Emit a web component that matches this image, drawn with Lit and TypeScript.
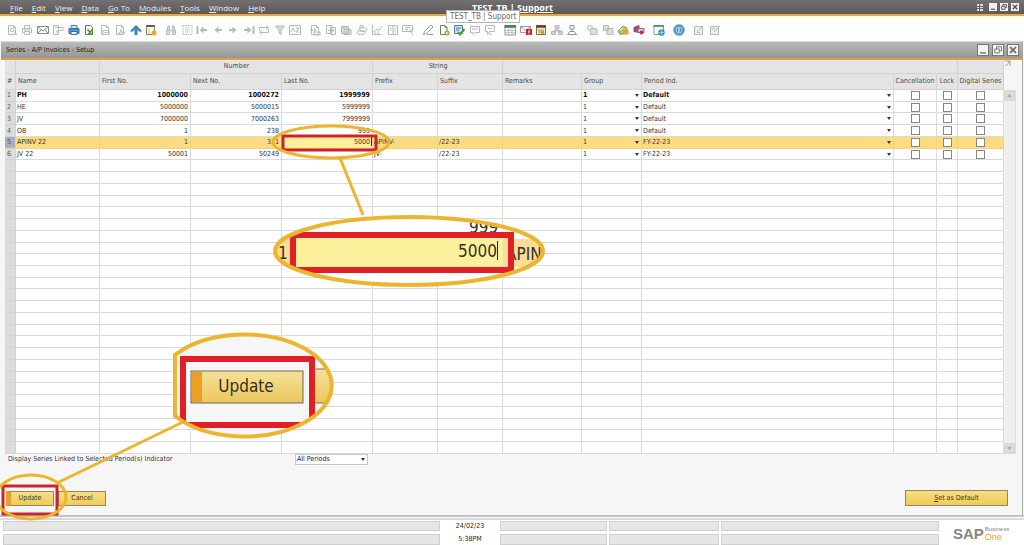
import { LitElement, html, css, svg, nothing } from "lit";
import { customElement, property } from "lit/decorators.js";
import { classMap } from "lit/directives/class-map.js";

interface SeriesRow {
  name: string;
  first: string;
  next: string;
  last: string;
  prefix?: string;
  suffix?: string;
  group: string;
  period: string;
  bold?: boolean;
  selected?: boolean;
}

const ROWS: SeriesRow[] = [
  { name: "PH", first: "1000000", next: "1000272", last: "1999999", group: "1", period: "Default", bold: true },
  { name: "HE", first: "5000000", next: "5000015", last: "5999999", group: "1", period: "Default" },
  { name: "JV", first: "7000000", next: "7000263", last: "7999999", group: "1", period: "Default" },
  { name: "OB", first: "1", next: "238", last: "999", group: "1", period: "Default" },
  { name: "APINV 22", first: "1", next: "311", last: "5000", prefix: "APINV-", suffix: "/22-23", group: "1", period: "FY-22-23", selected: true },
  { name: "JV 22", first: "50001", next: "50249", last: "", prefix: "JV-", suffix: "/22-23", group: "1", period: "FY-22-23" },
];
const TOTAL_ROWS = 31;

const MENUS: [string, string][] = [
  ["F", "ile"], ["E", "dit"], ["V", "iew"], ["D", "ata"], ["G", "o To"],
  ["M", "odules"], ["T", "ools"], ["W", "indow"], ["H", "elp"],
];

const page = svg`<path d="M2.5 1.5h5l2 2v7h-7z" fill="#fff"/><path d="M7.500 1.500v2h2"/>`;
const arrowLeft = svg`<path d="M10 6H5" stroke-width="2"/><path d="M6.500 2.500L2.500 6l4 3.500z" fill="currentColor" stroke="none"/>`;
const arrowRight = svg`<path d="M2 6h5" stroke-width="2"/><path d="M5.500 2.500L9.500 6l-4 3.500z" fill="currentColor" stroke="none"/>`;

const ICONS: Record<string, unknown> = {
  preview: svg`${page}<circle cx="6" cy="6" r="1.800"/><path d="M7.500 7.500L11 11"/>`,
  print: svg`<path d="M3.500 4V1.500h5V4M3.500 9h-2V4.500h9V9h-2M3.500 7.500h5v3h-5z"/><path d="M3 6h6"/>`,
  mail: svg`<path d="M.5 2.500h11v7H.5zM.5 2.500L6 7l5.500-4.500M.5 9.500l4-4M11.500 9.500l-4-4" stroke="#8c8c8c"/>`,
  sms: svg`<path d="M1.500 1.500h5v9h-5zM3 3.500h5M8 3.500h3v3H7l-2 2v-2"/>`,
  fax: svg`<path d="M3 1.500h6V5H3z" fill="#cfe2ef" stroke="#4b87ac"/><path d="M1 4.500h10v5H1z" fill="#4f93bd" stroke="#3b759b"/><path d="M3 7.500h6v3H3z" fill="#e6f0f6" stroke="#3b759b"/>`,
  excel: svg`<path d="M2.500 1.500h5l2 2v7h-7z" fill="#f7fbf3" stroke="#5d7d55"/><path d="M4.500 5.500l5 5.500M9.500 5.500l-5 5.500" stroke="#4c9c35" stroke-width="1.600"/>`,
  word: svg`${page}<path d="M4 6.500h6v4H4zM5.500 8.500h3"/>`,
  pdf: svg`${page}<path d="M4 10c2-1 3-3 3-5 0 2 1 4 4 4-2-.5-5 0-7 1"/>`,
  launch: svg`<path d="M6 11V4" stroke="#3788bb" stroke-width="3"/><path d="M0 7l6-6 6 6-2 1-4-3.500L2 8z" fill="#3788bb" stroke="none"/>`,
  lockScreen: svg`<path d="M1.500 1.500h8v9h-8z" fill="#fff" stroke="#9a7e4f"/><path d="M1.500 2h8" stroke="#6b5b43" stroke-width="2"/><path d="M4 4v6" stroke="#bbb"/><circle cx="9" cy="9" r="2.500" fill="#f3a41c" stroke="none"/>`,
  find: svg`<path d="M1.500 6.500h3v4h-3zM7.500 6.500h3v4h-3zM2 6l1-4h1.500v4M10 6L9 2H7.500v4M4.500 6.500h3" fill="#ddd"/>`,
  add: svg`<path d="M2 1.500h9v9H2zM4 4h5M4 6h5M4 8h5" stroke-dasharray="1.500 .8"/>`,
  first: svg`<path d="M1.500 2v8" stroke-width="2"/><path d="M11 6H7" stroke-width="2"/><path d="M7.500 2.500L3.500 6l4 3.500z" fill="currentColor" stroke="none"/>`,
  previous: arrowLeft,
  next: arrowRight,
  last: svg`<path d="M10.500 2v8" stroke-width="2"/><path d="M1 6h4" stroke-width="2"/><path d="M4.500 2.500L8.500 6l-4 3.500z" fill="currentColor" stroke="none"/>`,
  refresh: svg`<path d="M1.500 7V3.500H10M10.500 5v3.500H2M8 1.500l2.500 2L8 5.500M4 6.500l-2.500 2L4 10.500"/>`,
  filter: svg`<path d="M1.500 2h9L7 6.500v4L5 9V6.500z" fill="#d8d8d8"/>`,
  sort: svg`<path d="M.5 1.500h11v9H.5zM2 8l2-4 2 4M7 4h3L7 8h3"/>`,
  baseDoc: svg`${page}<path d="M1 6h6M5 4l2 2-2 2M5 8h6v3H5z"/>`,
  targetDoc: svg`<path d="M1.500 1.500h5v8h-5zM5.500 3.500h5v7h-5zM3 6.500h6M7 4.500l2 2-2 2"/>`,
  gross: svg`<path d="M1.500 2.500h7v7h-7zM4 5.500h7v5H4zM2 4h6M5 8h5" fill="#e2e2e2"/>`,
  payment: svg`<ellipse cx="5" cy="8.500" rx="4" ry="2"/><ellipse cx="7" cy="5.500" rx="4" ry="2"/><path d="M4 5V1.500h3V4"/>`,
  volume: svg`<path d="M1.500 1v9.500h9M3 8l3-3 2 1.500 3-4M4 10V8M7 10V7"/>`,
  journal: svg`<path d="M1.500 1.500h9v9h-9zM6 1.500v9M3 4h1.500M3 6h1.500M7.500 4H9M7.500 6H9M7.500 8H9"/>`,
  layout: svg`<path d="M.5 1.500h10v6H.5zM3 3.500h5M3 5.500h3M6 8l4-3M8 7l3 4"/>`,
  edit: svg`<path d="M1.500 10.500l1-3L9 1l2 2-6.500 6.500zM5 10.500h6" stroke="#999"/>`,
  newActivity: svg`<path d="M2.500 1.500h4.500l2 2v7H2.500z" fill="#fff" stroke="#6d7a55"/><path d="M7 1.500v2h2" stroke="#6d7a55"/><circle cx="9" cy="9" r="2.500" fill="#7da51a" stroke="none"/><path d="M7.500 9h3M9 7.500v3" stroke="#fff" stroke-width=".8"/>`,
  approve: svg`<path d="M1.500 1.500h8v8h-8z" fill="#cfe3f2" stroke="#4480aa"/><path d="M3 4h5M3 6h3" stroke="#4480aa"/><path d="M5 8l2 2.500L11.500 5" stroke="#54952c" stroke-width="2"/>`,
  message: svg`<path d="M1.500 2.500h9v6H6l-2 2v-2H1.500zM3 5h6"/>`,
  reply: svg`<path d="M1.500 1.500h9v6h-5l-2 3v-3h-2zM8 10H5M4 4.500h4"/>`,
  table: svg`<path d="M1 1.500h10.500v9.500H1z" fill="#fff" stroke="#8e9a8b"/><path d="M.5 2.500h11.500" stroke="#4b7d4b" stroke-width="2.500"/><path d="M4.500 4v7M8 4v7M1 6.500h10.500M1 8.700h10.500" stroke="#a9b5a6" stroke-width=".8"/>`,
  alert: svg`<path d="M.5 2.500h10v6H.5zM.5 2.500l5 4 5-4" fill="#fff" stroke="#999"/><path d="M6 5h6v6H6z" fill="#c8242e" stroke="none"/><path d="M9 6v3M9 9.500v1" stroke="#fff"/>`,
  calendar: svg`<path d="M1.500 1.500h9v9h-9z" fill="#f7e7c4" stroke="#8a6f45"/><path d="M1 2.500h10" stroke="#5a4630" stroke-width="2.500"/><path d="M3 6h6M3 8h3" stroke="#a58d63"/><path d="M6 7h3v3H6z" fill="#e39a2c" stroke="none"/>`,
  orgChart: svg`<path d="M4 1.500h4V5H4zM.5 7.500h4v3h-4zM7.500 7.500h4v3h-4zM6 5v1.500M2.500 7.500v-1h7v1" fill="#cfcfcf"/>`,
  relation: svg`<path d="M4 1.500h4V5H4zM6 5v2M2 10.500l1.500-3h5l1.500 3zM1 10.500h10" stroke="#8c9a9f"/>`,
  copy: svg`<circle cx="4" cy="4" r="2.500"/><path d="M4.500 4.500h5l1.500 1v5H4.500z" fill="#ddd"/>`,
  paste: svg`<path d="M1.500 1.500h5v5h-5zM5 4.500h6v6H5z" fill="#ddd"/>`,
  inbox: svg`<path d="M1 7l5-5 4 2v5L3 10.500z" fill="#b8c46b" stroke="#8a9a4a"/><path d="M6 6h5.500v4.500H6z" fill="#e2a43a" stroke="none"/><path d="M3 6l3-2" stroke="#fff"/>`,
  campaign: svg`<path d="M1 3.500l5-2v7L1 7.500z" fill="#b14a72" stroke="#8b456f"/><path d="M5 4.500h6v4H5z" fill="#d8d3e8" stroke="#6b6aa8"/><circle cx="8.500" cy="8.500" r="2" fill="#d0342c" stroke="none"/>`,
  browser: svg`<path d="M1 1.500h9.500v9H1z" fill="#fff" stroke="#8b9aa5"/><path d="M.5 2h10.500" stroke="#657683" stroke-width="1.600"/><circle cx="8.500" cy="8.500" r="3.200" fill="#2f97b8" stroke="none"/><path d="M6 8.500h5M8.500 6v5" stroke="#bfe3ee" stroke-width=".7"/>`,
  help: svg`<circle cx="6" cy="6" r="5.500" fill="#4a90bf" stroke="#8db9d8"/><circle cx="6" cy="6" r="3" stroke="#cfe4f2" stroke-width=".8"/><path d="M6 4v4" stroke="#fff"/>`,
  note: svg`<path d="M1.500 2.500h8v8h-8zM4 8l6-6" fill="#eee"/><path d="M4 8.500h3"/>`,
  noteEdit: svg`<path d="M1.500 2.500h8v8h-8zM5 8l6-6M3 5h3" fill="#eee"/>`,
};

const TOOL_GROUPS: string[][] = [
  ["preview", "print", "mail", "sms", "fax", "excel", "word", "pdf", "launch", "lockScreen"],
  ["find", "add", "first", "previous", "next", "last", "refresh", "filter", "sort"],
  ["baseDoc", "targetDoc", "gross", "payment", "volume", "journal", "layout"],
  ["edit", "newActivity", "approve", "message", "reply"],
  ["table", "alert", "calendar", "orgChart", "relation"],
  ["copy", "paste", "inbox", "campaign"],
  ["browser"],
  ["help"],
  ["note", "noteEdit"],
];

@customElement("window-controls")
class WindowControls extends LitElement {
  @property({ type: Boolean, reflect: true }) large = false;

  static styles = css`
    :host { display: flex; gap: 3px; align-items: center; }
    .control { width: 8px; height: 8px; padding: 0; border: 0; background: #f2f2f2; display: grid; place-items: center; }
    :host([large]) .control { width: 12px; height: 12px; border: 1px solid #777; background: #f4f4f4; }
    .glyph { width: 6px; height: 6px; fill: none; stroke: #4e4e4e; stroke-width: 1.2; display: block; }
    :host([large]) .glyph { width: 8px; height: 8px; stroke: #777; stroke-width: 1; }
  `;

  render() {
    return html`
      <button class="control" aria-label="Minimize"><svg class="glyph" viewBox="0 0 8 8"><path d="M1 7h6" stroke-width="1.5"/></svg></button>
      <button class="control" aria-label="Restore"><svg class="glyph" viewBox="0 0 8 8"><path d="M2.500 3V.8h5v4h-2M.8 3h4.500v4H.8z"/></svg></button>
      <button class="control" aria-label="Close"><svg class="glyph" viewBox="0 0 8 8"><path d="M1 1l6 6M7 1L1 7" stroke-width="1.800"/></svg></button>
    `;
  }
}

@customElement("tool-bar")
class ToolBar extends LitElement {
  static styles = css`
    :host { display: flex; gap: 8px; align-items: center; height: 25px; padding: 2px 6px 0; box-sizing: border-box; background: linear-gradient(#fffbe0, #fdfdfd 4px); }
    .group { display: flex; justify-content: space-between; flex: none; }
    .tool { width: 12px; height: 12px; padding: 0; border: 0; background: none; color: #b8b8b8; }
    .icon { display: block; width: 12px; height: 12px; fill: none; stroke: currentColor; stroke-width: 1; }
  `;

  render() {
    return TOOL_GROUPS.map((group) => html`
      <div class="group" style="width:${Math.round(group.length * 15.4) - 3}px">
        ${group.map((name) => html`<button class="tool" aria-label=${name}><svg class="icon" viewBox="0 0 12 12">${ICONS[name]}</svg></button>`)}
      </div>`);
  }
}

@customElement("series-table")
class SeriesTable extends LitElement {
  static styles = css`
    :host { display: grid; grid-template-columns: minmax(0, 1fr) 12px; min-height: 0; }
    .grid { border-collapse: separate; border-spacing: 0; table-layout: fixed; width: 100%; height: 100%; background: #fff; }
    .c-index { width: 11px; }
    .c-name { width: 84px; }
    .c-number { width: 91px; }
    .c-string { width: 65px; }
    .c-remarks { width: 79px; }
    .c-group { width: 60px; }
    .c-cancel { width: 43px; }
    .c-lock { width: 21px; }
    .c-digital { width: 46px; }
    th { height: 14px; box-sizing: border-box; padding: 0 1px 0 2px; background: #e4e4e4; border-right: 1px solid #d2d2d2; border-bottom: 1px solid #d2d2d2; font-weight: 400; color: #4a4a4a; text-align: left; white-space: nowrap; line-height: 11px; }
    .labels th { height: 16px; }
    .span { text-align: center; }
    .open { border-right-color: #e4e4e4; }
    .check, .labels .check { text-align: center; padding: 0; }
    td { height: 11px; box-sizing: border-box; padding: 0 2px 0 1px; border-right: 1px solid #dadada; border-bottom: 1px solid #dadada; line-height: 10px; white-space: nowrap; color: #333; }
    .index { background: #dcdcdc; border-color: #d2d2d2; color: #555; padding: 0 1px 0 2px; }
    .num { text-align: right; }
    .bold td { font-weight: 700; color: #111; }
    .bold .index { font-weight: 400; color: #555; }
    .selected td { background: #fddb80; border-color: #f5d37a; }
    .selected .index { background: #a8aec0; }
    .selected .editing { background: #fdf09c; padding: 0; }
    .edit { display: block; box-sizing: border-box; width: 100%; height: 10px; padding: 0 2px 0 0; border: 0; outline: 0; background: transparent; font: inherit; color: #333; text-align: right; }
    .picker { display: grid; grid-template-columns: minmax(0, 1fr) 5px; align-items: center; }
    .select { appearance: none; grid-area: 1 / 1 / 2 / 3; width: 100%; height: 10px; padding: 0; border: 0; background: transparent; font: inherit; line-height: 10px; color: inherit; }
    .arrow { grid-area: 1 / 2; pointer-events: none; border: 2px solid transparent; border-top: 3px solid #333; border-bottom: 0; justify-self: end; }
    .box { appearance: none; display: block; box-sizing: border-box; width: 9px; height: 9px; margin: 0 auto; border: 1px solid #858585; background: #fff; }
    .scroll { display: flex; flex-direction: column; justify-content: space-between; margin-top: 30px; background: #efefef; border-right: 1px solid #ddd; }
    .step { width: 11px; height: 11px; padding: 0; border: 0; background: #dadada; display: grid; place-items: center; }
    .tri { width: 5px; height: 3px; fill: #aaa; }
    .side { position: relative; display: grid; }
    .expand { position: absolute; top: 0; left: 0; width: 8px; height: 8px; fill: none; stroke: #999; }
  `;

  private picker(value: string, label: string) {
    return html`<div class="picker">
      <select class="select" aria-label=${label}><option>${value}</option></select>
      <span class="arrow"></span>
    </div>`;
  }

  private row(index: number) {
    const r = ROWS[index];
    if (!r) {
      return html`<tr><td class="index"></td>${Array.from({ length: 12 }, () => html`<td></td>`)}</tr>`;
    }
    const box = (label: string) => html`<td class="check"><input class="box" type="checkbox" aria-label="${label}, ${r.name}" /></td>`;
    return html`<tr class=${classMap({ bold: !!r.bold, selected: !!r.selected })}>
      <td class="index">${index + 1}</td>
      <td>${r.name}</td>
      <td class="num">${r.first}</td>
      <td class="num">${r.next}</td>
      ${r.selected
        ? html`<td class="num editing"><input class="edit" aria-label="Last No., ${r.name}" .value=${r.last} /></td>`
        : html`<td class="num">${r.last}</td>`}
      <td>${r.prefix ?? nothing}</td>
      <td>${r.suffix ?? nothing}</td>
      <td></td>
      <td>${this.picker(r.group, `Group, ${r.name}`)}</td>
      <td>${this.picker(r.period, `Period Ind., ${r.name}`)}</td>
      ${box("Cancellation")}${box("Lock")}${box("Digital Series")}
    </tr>`;
  }

  render() {
    return html`
      <table class="grid">
        <colgroup>
          <col class="c-index" /><col class="c-name" /><col class="c-number" /><col class="c-number" /><col class="c-number" />
          <col class="c-string" /><col class="c-string" /><col class="c-remarks" /><col class="c-group" /><col />
          <col class="c-cancel" /><col class="c-lock" /><col class="c-digital" />
        </colgroup>
        <thead>
          <tr>
            <th></th><th></th>
            <th class="span" colspan="3">Number</th>
            <th class="span" colspan="2">String</th>
            <th class="open" colspan="4"></th><th></th><th></th>
          </tr>
          <tr class="labels">
            <th>#</th><th>Name</th><th>First No.</th><th>Next No.</th><th>Last No.</th><th>Prefix</th><th>Suffix</th>
            <th>Remarks</th><th>Group</th><th>Period Ind.</th>
            <th class="check">Cancellation</th><th class="check">Lock</th><th class="check">Digital Series</th>
          </tr>
        </thead>
        <tbody>${Array.from({ length: TOTAL_ROWS }, (_, i) => this.row(i))}</tbody>
      </table>
      <div class="side">
        <svg class="expand" viewBox="0 0 8 8"><path d="M1 1h5v5M6 1L2 6"/></svg>
        <div class="scroll">
          <button class="step" aria-label="Scroll up"><svg class="tri" viewBox="0 0 6 4"><path d="M0 4l3-4 3 4z"/></svg></button>
          <button class="step" aria-label="Scroll down"><svg class="tri" viewBox="0 0 6 4"><path d="M0 0l3 4 3-4z"/></svg></button>
        </div>
      </div>
    `;
  }
}

@customElement("call-outs")
class CallOuts extends LitElement {
  static styles = css`
    :host { position: absolute; top: 0; left: 0; pointer-events: none; }
    .layer { display: block; }
    .ring { fill: none; stroke: #ebb52f; stroke-width: 3; }
    .ring-lg { fill: none; stroke: #ebb52f; stroke-width: 4; }
    .frame { fill: none; stroke: #c9252b; stroke-width: 3; }
    .frame-lg { fill: none; stroke: #e11f26; stroke-width: 6; }
    .label { font-size: 17px; fill: #33301f; }
    .band { fill: #fbdd98; }
    .caret { stroke: #222; stroke-width: 1; }
  `;

  render() {
    return html`<svg class="layer" width="560" height="545" viewBox="0 0 560 545">
      <defs>
        <clipPath id="cell"><ellipse cx="409" cy="251" rx="134" ry="34"/></clipPath>
        <clipPath id="update"><path d="M175 355A87 51 0 1 1 175 416z"/></clipPath>
        <linearGradient id="gold" x1="0" y1="0" x2="0" y2="1">
          <stop offset="0" stop-color="#f6e19a"/><stop offset="1" stop-color="#ebc75c"/>
        </linearGradient>
      </defs>

      <path class="caret" d="M371.500 137v9"/>
      <rect class="frame" x="283" y="136" width="93" height="14"/>
      <ellipse class="ring" cx="331" cy="142" rx="58" ry="16"/>
      <path class="ring" d="M340 158l23 57"/>

      <g clip-path="url(#cell)">
        <rect x="270" y="214" width="280" height="76" fill="#fff"/>
        <rect class="band" x="270" y="239" width="280" height="28"/>
        <text class="label" x="278" y="259">1</text>
        <text class="label" x="469" y="233">999</text>
        <text class="label" x="506" y="260">APINV</text>
        <rect class="frame-lg" x="293" y="235" width="218" height="35"/>
        <rect x="296" y="238" width="207" height="29" fill="#fdf09c"/>
        <rect x="503" y="238" width="5" height="29" fill="#f5dca2"/>
        <text class="label" x="497" y="257" text-anchor="end">5000</text>
        <path class="caret" d="M497.500 241v19"/>
      </g>
      <ellipse class="ring-lg" cx="409" cy="251" rx="134" ry="34"/>

      <path class="ring" d="M183 422L57 483"/>
      <g clip-path="url(#update)">
        <rect x="170" y="330" width="170" height="112" fill="#f6f6f6"/>
        <rect x="310" y="369" width="30" height="34" fill="url(#gold)" stroke="#77735f"/>
        <rect class="frame-lg" x="183" y="359" width="129" height="66" fill="#f6f6f6"/>
        <rect x="191" y="371" width="112" height="32" fill="url(#gold)" stroke="#6a675a"/>
        <rect x="192" y="372" width="10" height="30" fill="#ec9f22"/>
        <text class="label" x="246" y="392" text-anchor="middle">Update</text>
      </g>
      <path class="ring-lg" d="M175 355A87 51 0 1 1 175 416z"/>

      <rect class="frame" x="3" y="486" width="54" height="28"/>
      <ellipse class="ring" cx="31" cy="497" rx="35" ry="22"/>
    </svg>`;
  }
}

@customElement("app-root")
class AppRoot extends LitElement {
  static styles = css`
    :host { display: flex; flex-direction: column; position: relative; min-height: 100vh; overflow: hidden; box-sizing: border-box; background: #f6f6f6; font: 7px/11px "DejaVu Sans Condensed", "DejaVu Sans", sans-serif; font-stretch: condensed; color: #333; }
    .menubar { display: grid; grid-template-columns: 1fr auto 1fr; align-items: center; height: 16px; box-sizing: border-box; border-bottom: 2px solid #e5ac3c; padding: 0 5px 0 6px; background: linear-gradient(#737173, #5d5859); font-family: "Open Sans", sans-serif; font-size: 8px; font-stretch: normal; color: #f0f0f0; }
    .menus { display: flex; gap: 1px; }
    .menu { padding: 0 4px; border: 0; background: none; color: inherit; font: inherit; }
    .key { text-decoration: underline; }
    .title { font-size: 9px; font-weight: 700; text-decoration: underline; color: #fff; }
    .tip { position: absolute; top: 10px; left: 446px; padding: 0 3px; border: 1px solid #b5b5b5; background: #fff; color: #666; font-size: 8px; z-index: 2; }
    .system { display: flex; justify-content: flex-end; align-items: center; gap: 6px; }
    .tiles { width: 6px; height: 7px; fill: #ddd; }
    .child { flex: 1; display: flex; flex-direction: column; margin: 0 1px 0 1px; border-right: 1px solid #aaa; }
    .caption { display: flex; justify-content: space-between; align-items: center; height: 19px; box-sizing: border-box; border-top: 1px solid #ddd; border-bottom: 2px solid #d9a04a; padding: 0 3px 0 5px; background: linear-gradient(#b9b9b9, #969696); color: #222; }
    .series { flex: 1; margin: 0 6px 0 4px; }
    .filter { display: flex; align-items: center; height: 11px; padding: 0 7px; }
    .filter-label { width: 287px; }
    .period { display: grid; align-items: center; }
    .drop { appearance: none; grid-area: 1 / 1; box-sizing: border-box; width: 73px; height: 11px; padding: 0 1px; border: 1px solid #c8c8c8; background: #fff; font: inherit; line-height: 9px; color: #222; }
    .arrow { grid-area: 1 / 1; justify-self: end; margin-right: 3px; border: 2px solid transparent; border-top: 3px solid #333; border-bottom: 0; pointer-events: none; }
    .actions { display: flex; gap: 4px; align-items: center; padding: 25px 14px 9px 5px; }
    .btn { width: 48px; height: 15px; padding: 0; border: 1px solid #8f8865; background: linear-gradient(#f7dd84, #f0cb58); font: inherit; color: #3a3524; }
    .primary { border-left: 5px solid #e9a02b; padding-right: 4px; }
    .default { width: 103px; height: 16px; margin-left: auto; }
    .status { display: grid; grid-template-columns: 437px 56px 107px 110px 1fr 83px; grid-template-rows: 10px 11px; gap: 3px 2px; padding: 4px 0 0 3px; border-top: 2px solid #c4c4c4; background: #fff linear-gradient(#fff 1px, #dadada 1px, #dadada 3px, #fff 3px) no-repeat; }
    .slot { background: #e6e6e6; border: 1px solid #cfcfcf; box-sizing: border-box; }
    .clock { text-align: center; color: #222; }
    .brand { grid-area: 1 / 6 / 3 / 7; display: flex; align-items: center; gap: 1px; padding: 0 0 0 12px; color: #858585; }
    .sap { font: 700 15px/15px "Liberation Sans", sans-serif; }
    .product { display: grid; font: 6px/7px "Liberation Sans", sans-serif; }
    .one { font: 9px/8px "Liberation Sans", sans-serif; color: #e6a52f; }
  `;

  render() {
    const slots = () => html`<span class="slot"></span>`;
    return html`
      <header class="menubar">
        <nav class="menus">${MENUS.map(([key, rest]) => html`<button class="menu"><span class="key">${key}</span>${rest}</button>`)}</nav>
        <span class="title">TEST_TB | Support</span>
        <div class="system">
          <svg class="tiles" viewBox="0 0 6 7"><path d="M0 0h2v2H0zM0 3h2v1H0zM0 5h2v2H0zM3 0h3v2H3zM3 3h3v1H3zM3 5h3v2H3z"/></svg>
          <window-controls></window-controls>
        </div>
      </header>
      <span class="tip">TEST_TB | Support</span>
      <tool-bar></tool-bar>
      <main class="child">
        <div class="caption"><span>Series - A/P Invoices - Setup</span><window-controls large></window-controls></div>
        <series-table class="series"></series-table>
        <div class="filter">
          <label class="filter-label" for="periods">Display Series Linked to Selected Period(s) Indicator</label>
          <div class="period"><select id="periods" class="drop"><option>All Periods</option></select><span class="arrow"></span></div>
        </div>
        <div class="actions">
          <button class="btn primary">Update</button>
          <button class="btn">Cancel</button>
          <button class="btn default"><span class="key">S</span>et as Default</button>
        </div>
      </main>
      <footer class="status">
        ${slots()}<time class="clock">24/02/23</time>${slots()}${slots()}${slots()}
        ${slots()}<time class="clock">5:38PM</time>${slots()}${slots()}${slots()}
        <div class="brand"><span class="sap">SAP</span><span class="product"><span>Business</span><span class="one">One</span></span></div>
      </footer>
      <call-outs></call-outs>
    `;
  }
}
